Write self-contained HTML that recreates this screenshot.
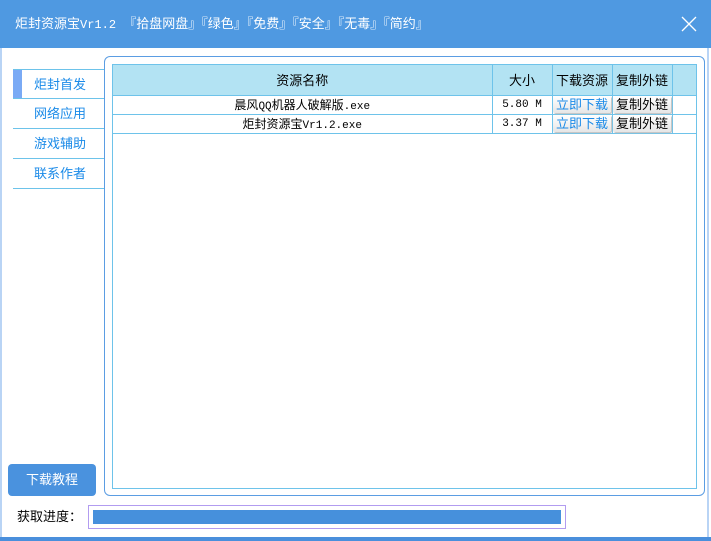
<!DOCTYPE html>
<html><head><meta charset="utf-8"><style>
*{margin:0;padding:0;box-sizing:border-box}
body{width:711px;height:541px;overflow:hidden;background:#fff;position:relative;font-family:"Liberation Sans","Noto Sans CJK SC","WenQuanYi Zen Hei",sans-serif;font-size:12px;color:#000}
.abs{position:absolute}
.m{font-family:"Liberation Mono","Noto Sans CJK SC",monospace;font-size:11px}
#title{left:0;top:0;width:711px;height:48px;background:#4f99e1;color:#fff;font-size:13px;line-height:48px;padding-left:15px;white-space:pre}
#close{right:12px;top:14px;width:20px;height:20px}
#lb{left:0;top:48px;width:2px;height:490px;background:#b9d4f5}
#rb{left:707px;top:48px;width:2px;height:490px;background:#b9d4f5}
#bb{left:0;top:537px;width:711px;height:4px;background:#4a8fdc}
.nav{left:13px;width:91px;height:30px;border-bottom:1px solid #6dc3ea;color:#1a8ae8;font-size:13px;line-height:29px;padding-left:21px}
#panel{left:104px;top:56px;width:601px;height:440px;border:1.5px solid #5b9de3;border-radius:6px}
#box{left:112px;top:64px;width:585px;height:425px;border:1px solid #6ec3ea}
table{position:absolute;left:113px;top:65px;border-collapse:collapse}
td{border:1px solid #6ec3ea;text-align:center;height:19px;font-size:12px;white-space:nowrap}
tr.h td{background:#b3e3f3;height:30px;font-size:13px;border-top:none}
.b{display:inline-block;height:17px;line-height:17px;padding:0 3px;background:linear-gradient(#fff,#e6e6e6);border-radius:2px;box-shadow:1px 1px 1px #bbb;font-size:13px}
#dl{left:8px;top:464px;width:88px;height:32px;background:#4a92de;border-radius:4px;color:#fff;font-size:13px;line-height:32px;text-align:center}
#pl{left:17px;top:506px;font-size:13px}
#pb{left:88px;top:505px;width:478px;height:24px;border:1px solid #b29cf0}
#pi{left:93px;top:510px;width:468px;height:14px;background:#4690dc}
</style></head><body>
<div id="title" class="abs">炬封资源宝<span style="font-family:'Liberation Mono',monospace;font-size:12px">Vr1.2</span>  『拾盘网盘』『绿色』『免费』『安全』『无毒』『简约』</div>
<svg id="close" class="abs" viewBox="0 0 20 20"><path d="M3 3L17 17M17 3L3 17" stroke="#fff" stroke-width="1.3"/></svg>
<div id="lb" class="abs"></div><div id="rb" class="abs"></div><div id="bb" class="abs"></div>
<div class="abs" style="left:13px;top:69px;width:91px;height:1px;background:#6dc3ea"></div>
<div class="abs" style="left:13px;top:70px;width:9px;height:28px;background:#7aaaf5"></div>
<div class="nav abs" style="top:69px;height:30px;border-top:1px solid #6dc3ea">炬封首发</div>
<div class="nav abs" style="top:99px">网络应用</div>
<div class="nav abs" style="top:129px">游戏辅助</div>
<div class="nav abs" style="top:159px">联系作者</div>
<div id="panel" class="abs"></div>
<div id="box" class="abs"></div>
<table>
<tr class="h"><td style="width:379px;border-left:none">资源名称</td><td style="width:60px">大小</td><td style="width:60px">下载资源</td><td style="width:60px">复制外链</td><td style="width:24px;border-right:none"></td></tr>
<tr><td class="m" style="border-left:none;font-size:12px">晨风<span class="m">QQ</span>机器人破解版<span class="m">.exe</span></td><td class="m">5.80 M</td><td><span class="b" style="color:#1a8ae8">立即下载</span></td><td><span class="b">复制外链</span></td><td style="border-right:none"></td></tr>
<tr><td style="border-left:none">炬封资源宝<span class="m">Vr1.2.exe</span></td><td class="m">3.37 M</td><td><span class="b" style="color:#1a8ae8">立即下载</span></td><td><span class="b">复制外链</span></td><td style="border-right:none"></td></tr>
</table>
<div id="dl" class="abs">下载教程</div>
<div id="pl" class="abs">获取进度：</div>
<div id="pb" class="abs"></div><div id="pi" class="abs"></div>
</body></html>
